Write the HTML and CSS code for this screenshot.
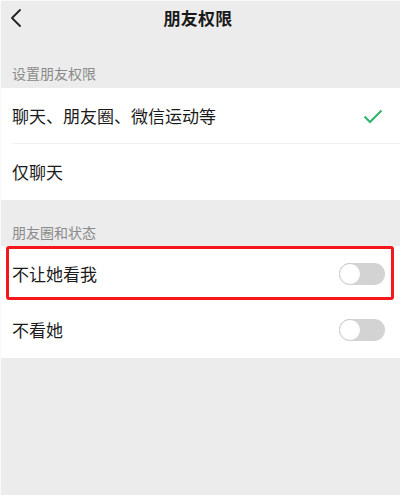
FILE: index.html
```html
<!DOCTYPE html>
<html lang="zh-CN">
<head>
<meta charset="utf-8">
<title>朋友权限</title>
<link rel="stylesheet" href="styles.css">
</head>
<body>
<div class="page">
  <header class="nav">
    <svg class="back" width="12" height="20" viewBox="0 0 12 20"><polyline points="10,2 2,10 10,18" fill="none" stroke="#222" stroke-width="1.8" stroke-linecap="round" stroke-linejoin="round"/></svg>
    <h1 class="title">朋友权限</h1>
  </header>
  <div class="group-label first">设置朋友权限</div>
  <section class="group">
    <div class="row divided">
      <span class="text">聊天、朋友圈、微信运动等</span>
      <svg class="check" width="20" height="15" viewBox="0 0 20 15"><polyline points="1.5,7.5 7,13 18.5,1.5" fill="none" stroke="#2fb46c" stroke-width="2"/></svg>
    </div>
    <div class="row">
      <span class="text">仅聊天</span>
    </div>
  </section>
  <div class="group-label second">朋友圈和状态</div>
  <section class="group">
    <div class="row highlighted">
      <span class="text">不让她看我</span>
      <span class="switch"><span class="knob"></span></span>
      <span class="mark"></span>
    </div>
    <div class="row">
      <span class="text">不看她</span>
      <span class="switch"><span class="knob"></span></span>
    </div>
  </section>
</div>
</body>
</html>
```

FILE: styles.css
```css
html, body {
  margin: 0;
  padding: 0;
  background: #ededed;
}
body {
  font-family: "Noto Sans CJK SC", "Noto Sans", sans-serif;
  color: #1b1b1b;
}
.page {
  width: 400px;
  height: 495px;
  box-sizing: border-box;
  border-top: 1px solid #fafafa;
  border-left: 1px solid #fafafa;
  background: #ececec;
}
.nav {
  height: 34px;
  display: flex;
  align-items: center;
  justify-content: center;
  position: relative;
}
.back {
  position: absolute;
  left: 9px;
  top: 7px;
}
.title {
  margin: 0;
  font-size: 17px;
  font-weight: 700;
  line-height: 20px;
  color: #1a1a1a;
  letter-spacing: 0.2px;
  margin-left: -5px;
}
.group-label {
  font-size: 14px;
  color: #8a8a8a;
  line-height: 20px;
  padding-left: 11px;
  box-sizing: border-box;
  display: flex;
  align-items: flex-end;
}
.group-label.first {
  height: 53px;
  padding-bottom: 5px;
}
.group-label.second {
  height: 46px;
  padding-bottom: 4px;
}
.group {
  background: #fff;
}
.row {
  height: 56px;
  display: flex;
  align-items: center;
  justify-content: space-between;
  padding: 0 14px 0 11px;
  position: relative;
}
.row.divided::after {
  content: "";
  position: absolute;
  left: 11px;
  right: 0;
  bottom: 0;
  height: 1px;
  background: #f0f0f0;
}
.text {
  font-size: 17px;
  line-height: 22px;
}
.check {
  margin-right: 3px;
}
.switch {
  width: 46px;
  height: 22px;
  border-radius: 11px;
  background: #d3d3d3;
  position: relative;
  margin-right: 1px;
}
.knob {
  position: absolute;
  left: 0;
  top: 0;
  width: 22px;
  height: 22px;
  box-sizing: border-box;
  border-radius: 50%;
  background: #fff;
  border: 1px solid #cfcfcf;
}
.mark {
  position: absolute;
  left: 5px;
  right: 6px;
  top: 0;
  height: 54px;
  box-sizing: border-box;
  border: 3px solid #f5171b;
  border-radius: 3px;
}
```
